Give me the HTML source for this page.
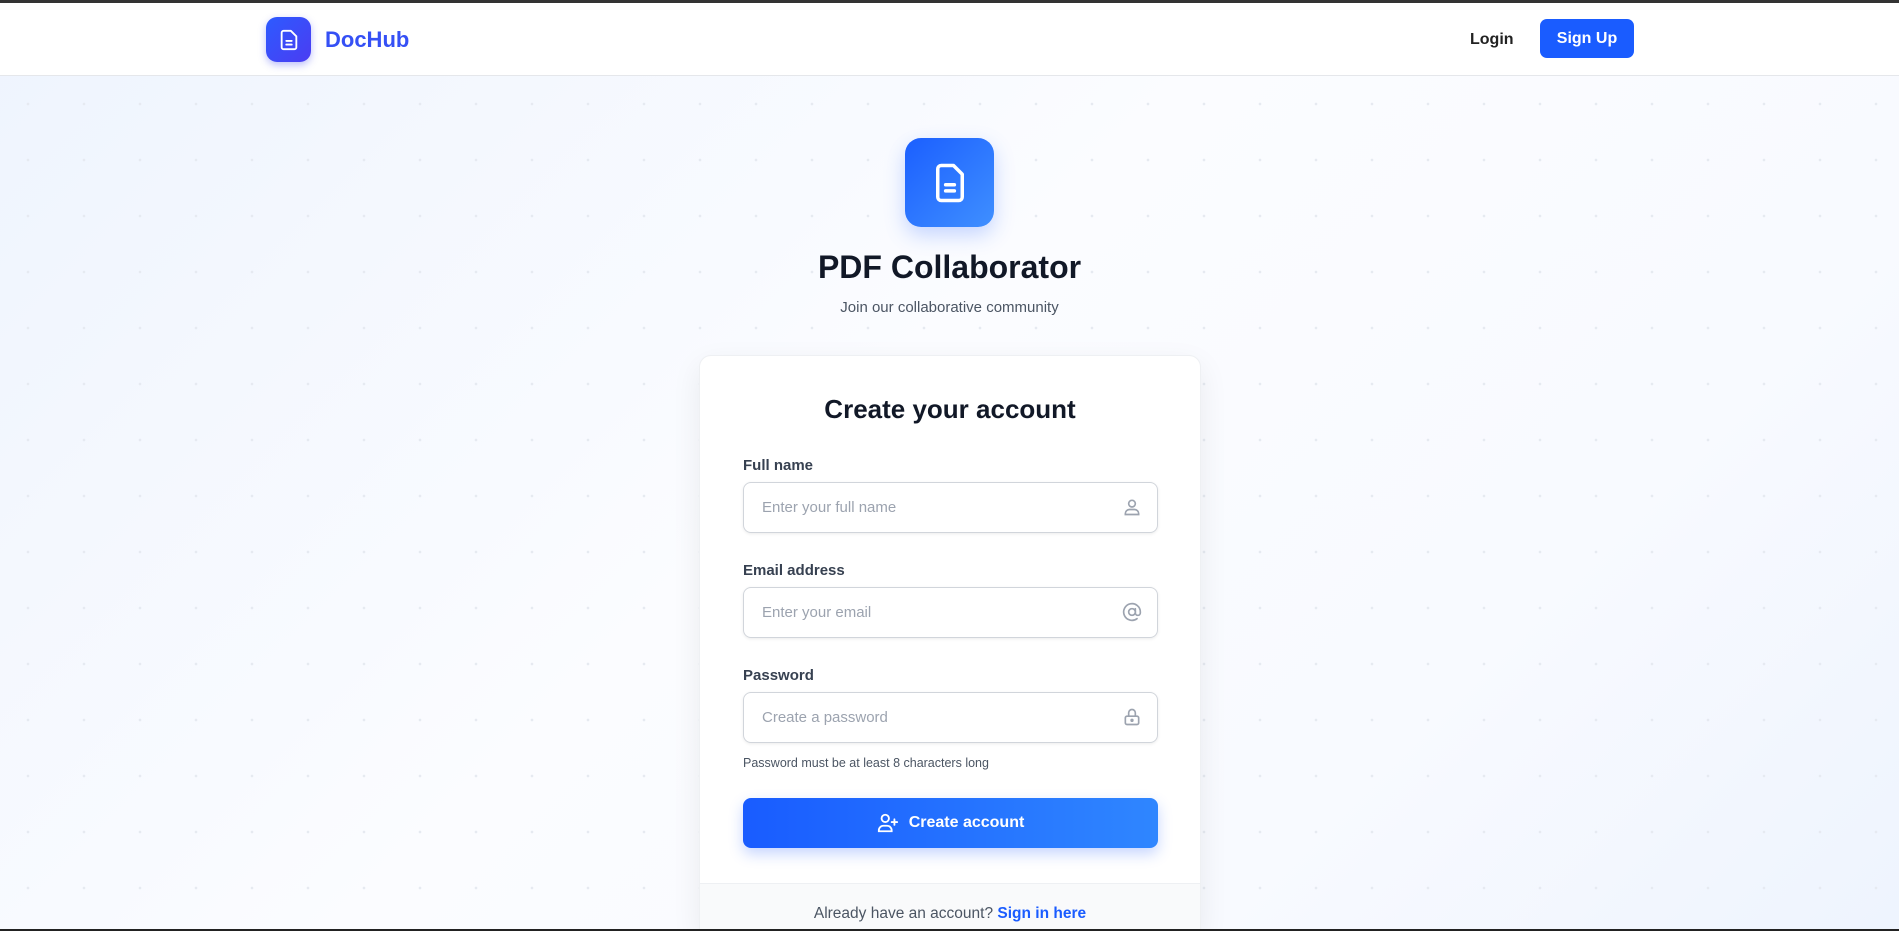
<!DOCTYPE html>
<html><head><meta charset="utf-8"><style>
*{box-sizing:border-box;margin:0;padding:0}
html{width:1899px;height:931px;overflow:hidden}
body{width:1899px;height:931px;overflow:hidden;font-family:"Liberation Sans",sans-serif;background:linear-gradient(135deg,#eef4fe 0%,#fbfcff 45%,#f8faff 75%,#eef4fe 100%);position:relative}
.top{position:absolute;left:0;right:0;top:0;height:3px;background:#333;z-index:5}
.dots{position:absolute;inset:0;background-image:radial-gradient(circle,#e6eaf1 1.2px,transparent 1.5px);background-size:56px 56px;background-position:0 20px;}
nav{position:absolute;top:0;left:0;right:0;height:76px;background:#fff;border-bottom:1px solid #e5e7eb;z-index:2}
.logo{position:absolute;left:266px;top:17px;width:45px;height:45px;border-radius:11px;background:linear-gradient(135deg,#2d5bff,#4b3cf2);box-shadow:0 3px 8px rgba(60,70,240,.35);display:flex;align-items:center;justify-content:center}
.brand{position:absolute;left:325px;top:27px;font-size:22px;font-weight:bold;color:#3550f5}
.login{position:absolute;left:1470px;top:31px;font-size:16px;color:#222;font-weight:bold}
.signup{position:absolute;left:1540px;top:19px;width:94px;height:39px;border-radius:7px;background:#1a5cff;color:#fff;font-weight:bold;font-size:16px;display:flex;align-items:center;justify-content:center}
.big{position:absolute;left:905px;top:138px;width:89px;height:89px;border-radius:16px;background:linear-gradient(135deg,#1b5fff,#3f8fff);box-shadow:0 8px 20px rgba(40,100,255,.25);display:flex;align-items:center;justify-content:center}
h1{position:absolute;left:0;right:0;top:249px;text-align:center;font-size:32px;color:#111827}
.sub{position:absolute;left:0;right:0;top:299px;text-align:center;font-size:15px;color:#4b5563}
.card{position:absolute;left:699px;top:355px;width:502px;height:576px;background:#fff;border-radius:12px 12px 0 0;box-shadow:0 10px 30px rgba(0,0,0,.07);border:1px solid #eef0f3;overflow:hidden}
h2{position:absolute;left:0;right:0;top:38px;text-align:center;font-size:26px;color:#111827}
.lbl{position:absolute;left:43px;font-size:15px;font-weight:bold;color:#374151}
.inp{position:absolute;left:43px;width:415px;height:51px;border:1.5px solid #d1d5db;border-radius:8px;box-shadow:0 1px 3px rgba(0,0,0,.08);font-size:15px;color:#9ca3af;padding:16px 0 0 18px}
.inp svg{position:absolute;right:15px;top:14px}
.hint{position:absolute;left:43px;top:400px;font-size:12.5px;color:#4b5563}
.btn{position:absolute;left:43px;top:442px;width:415px;height:50px;border-radius:8px;background:linear-gradient(90deg,#195cff,#2f86ff);color:#fff;font-weight:bold;font-size:16px;display:flex;align-items:center;justify-content:center;gap:10px;box-shadow:0 6px 14px rgba(30,90,255,.25)}
.foot{position:absolute;left:0;right:0;top:527px;height:80px;background:#f9fafb;border-top:1px solid #eef0f3;text-align:center;padding-top:21px;font-size:15.5px;color:#4b5563}
.foot b{color:#1a5cff}
.bot{position:absolute;left:0;right:0;bottom:0;height:2px;background:#222;z-index:5}
</style></head><body>
<div class="top"></div>
<div class="dots"></div>
<nav>
<div class="logo"><svg width="22" height="22" viewBox="0 0 24 24" fill="none" stroke="#fff" stroke-width="2" stroke-linecap="round" stroke-linejoin="round"><path d="M14 2H6a2 2 0 0 0-2 2v16a2 2 0 0 0 2 2h12a2 2 0 0 0 2-2V8z"/><path d="M9 13h6M9 17h6"/></svg></div>
<div class="brand">DocHub</div>
<div class="login">Login</div>
<div class="signup">Sign Up</div>
</nav>
<div class="big"><svg width="42" height="42" viewBox="0 0 24 24" fill="none" stroke="#fff" stroke-width="2" stroke-linecap="round" stroke-linejoin="round"><path d="M14 2H7a2 2 0 0 0-2 2v16a2 2 0 0 0 2 2h10a2 2 0 0 0 2-2V7z"/><path d="M9.5 13h5M9.5 16.5h5"/></svg></div>
<h1>PDF Collaborator</h1>
<div class="sub">Join our collaborative community</div>
<div class="card">
<h2>Create your account</h2>
<div class="lbl" style="top:101px">Full name</div>
<div class="inp" style="top:126px">Enter your full name<svg width="20" height="20" viewBox="0 0 24 24" fill="none" stroke="#9ca3af" stroke-width="2"><circle cx="12" cy="8" r="4"/><path d="M4 21v-1a5 5 0 0 1 5-5h6a5 5 0 0 1 5 5v1z"/></svg></div>
<div class="lbl" style="top:206px">Email address</div>
<div class="inp" style="top:231px">Enter your email<svg width="20" height="20" viewBox="0 0 24 24" fill="none" stroke="#9ca3af" stroke-width="2" stroke-linecap="round"><circle cx="12" cy="12" r="4"/><path d="M16 8v5a3 3 0 0 0 6 0v-1a10 10 0 1 0-4 8"/></svg></div>
<div class="lbl" style="top:311px">Password</div>
<div class="inp" style="top:336px">Create a password<svg width="20" height="20" viewBox="0 0 24 24" fill="none" stroke="#9ca3af" stroke-width="2"><rect x="4" y="11" width="16" height="10" rx="2"/><path d="M8 11V7a4 4 0 0 1 8 0v4"/><circle cx="12" cy="16" r="1"/></svg></div>
<div class="hint">Password must be at least 8 characters long</div>
<div class="btn"><svg width="22" height="22" viewBox="0 0 24 24" fill="none" stroke="#fff" stroke-width="2" stroke-linecap="round"><circle cx="9" cy="7" r="4"/><path d="M2 21v-1a5 5 0 0 1 5-5h4a5 5 0 0 1 5 5v1z"/><path d="M19 8v6M16 11h6"/></svg>Create account</div>
<div class="foot">Already have an account? <b>Sign in here</b></div>
</div>
<div class="bot"></div>
</body></html>
